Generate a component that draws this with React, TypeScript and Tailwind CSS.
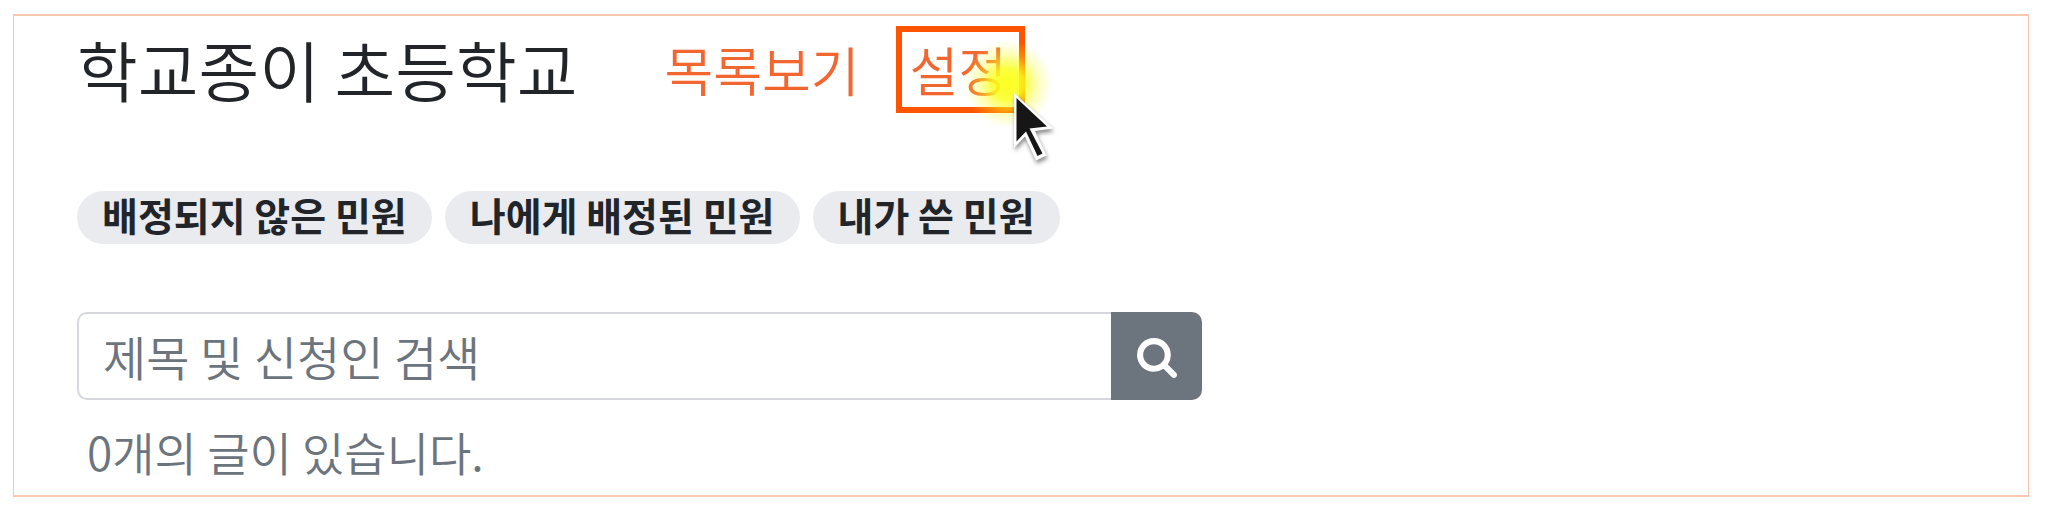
const filters = ["배정되지 않은 민원", "나에게 배정된 민원", "내가 쓴 민원"];

function SearchIcon() {
  return (
    <svg viewBox="0 128 1664 1664" fill="currentColor" className="size-10" aria-hidden="true">
      <path d="M1152 832q0-185-131.5-316.5t-316.5-131.5-316.5 131.5-131.5 316.5 131.5 316.5 316.5 131.5 316.5-131.5 131.5-316.5zm512 832q0 52-38 90t-90 38q-54 0-90-38l-343-342q-179 124-399 124-143 0-273.5-55.5t-225-150-150-225-55.5-273.5 55.5-273.5 150-225 225-150 273.5-55.5 273.5 55.5 225 150 150 225 55.5 273.5q0 220-124 399l343 343q37 37 37 90z" />
    </svg>
  );
}

function Pointer() {
  return (
    <svg
      viewBox="0 0 48 76"
      className="pointer-events-none absolute top-[59px] left-[109px] h-[76px] w-12 drop-shadow-[1px_3px_2px_rgba(0,0,0,0.45)]"
      aria-hidden="true"
    >
      <path d="M3 2 L42 37.5 L24 40 L35.5 64.5 L25 69.5 L14 45.5 L3 57 Z" fill="#fff" />
      <path d="M5.5 7 L36 35.5 L18.5 37.5 L31.5 62.5 L26.5 65 L15 40.5 L5.5 50.5 Z" fill="#161616" />
    </svg>
  );
}

export default function App() {
  return (
    <div className="bg-white pt-[14px] pr-[19px] pb-[14px] pl-[13px] font-['Noto_Sans_CJK_KR',sans-serif] text-[#212529]">
      <main className="border-x border-y-2 border-[#fbc6b0] px-[63px] pt-[10px] pb-3">
        <header className="flex items-start">
          <h1 className="text-[66px] leading-[84px] font-[350]">학교종이 초등학교</h1>
          <nav className="ml-[71px] flex items-center gap-5 text-[53px] leading-[75px] font-[350] text-[#f26630]">
            <a href="#list" className="px-4">
              목록보기
            </a>
            {/* Highlighted menu entry with the click glow and pointer over it */}
            <a href="#settings" className="relative border-6 border-[#ff5400] pr-3 pl-2">
              설정
              <span className="pointer-events-none absolute top-[8px] left-[62px] size-[88px] rounded-full bg-[radial-gradient(closest-side,#fbff1c_0%,#fbff1cd9_35%,#fbff1c4d_68%,#fbff1c00_100%)]" />
              <Pointer />
            </a>
          </nav>
        </header>

        <div className="mt-[78px] flex flex-wrap gap-[13px]">
          {filters.map((label) => (
            <button
              key={label}
              type="button"
              className="rounded-full bg-[#e9ebef] px-[25px] pb-1.5 text-[39px] leading-[47px] font-bold"
            >
              {label}
            </button>
          ))}
        </div>

        <form className="mt-[68px] flex h-[88px] w-full max-w-[1125px]" onSubmit={(e) => e.preventDefault()}>
          <input
            type="text"
            aria-label="제목 및 신청인 검색"
            placeholder="제목 및 신청인 검색"
            className="min-w-0 flex-1 rounded-l-[10px] border-2 border-r-0 border-[#d5d8dc] px-6 text-[47px] font-[350] outline-none placeholder:text-[#6c757d]"
          />
          <button
            type="submit"
            aria-label="검색"
            className="flex w-[91px] items-center justify-center rounded-r-[10px] bg-[#6c757d] pt-1 text-white"
          >
            <SearchIcon />
          </button>
        </form>

        <p className="mt-5 ml-[10px] text-[46px] leading-[63px] font-[350] text-[#6c757d]">0개의 글이 있습니다.</p>
      </main>
    </div>
  );
}
